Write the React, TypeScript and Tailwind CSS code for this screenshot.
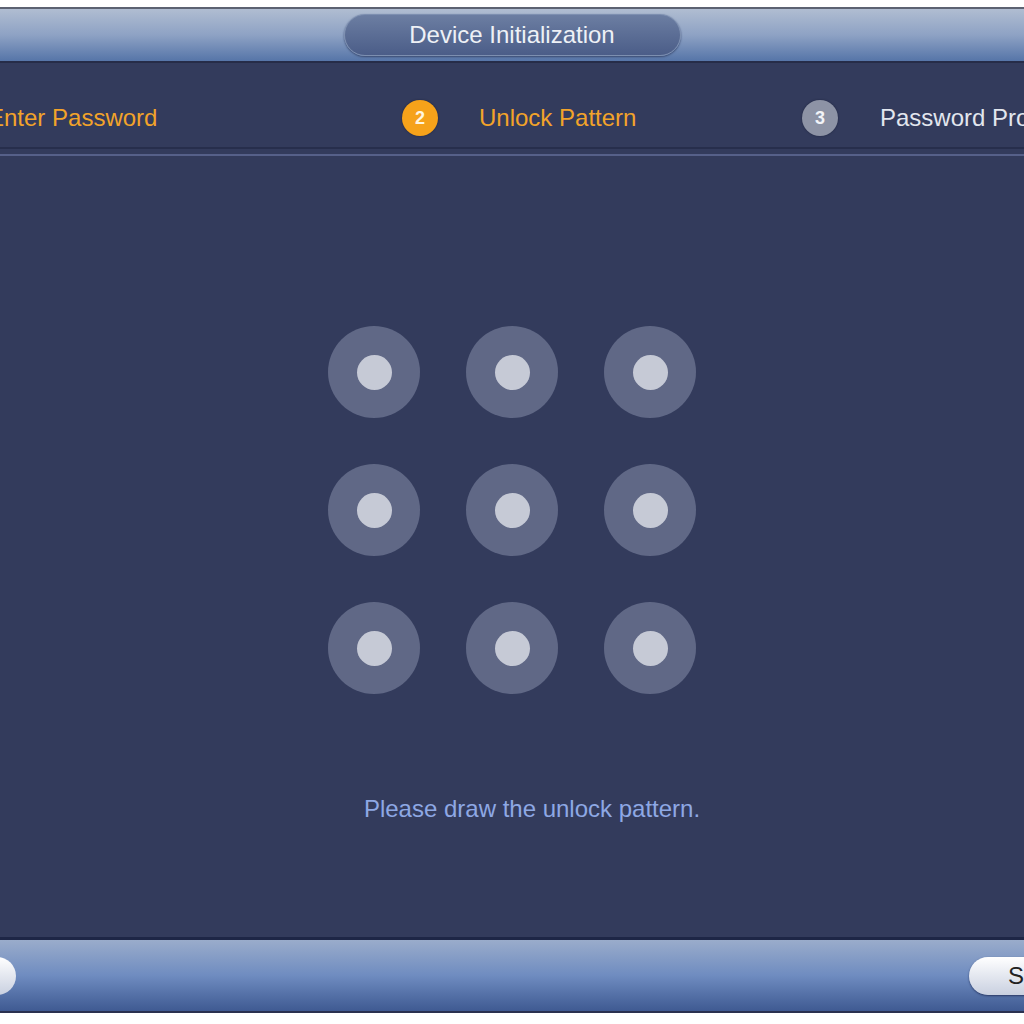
import React from 'react';

const font = { fontFamily: '"Liberation Sans", Arial, sans-serif' };

function StepBadge({ n, active }: { n: number; active?: boolean }) {
  return (
    <div
      className={
        active
          ? 'flex h-[36px] w-[36px] shrink-0 items-center justify-center rounded-full bg-[#f6a21a] text-[18px] font-bold text-[#fff6e0] shadow-[0_0_2px_#1c223c]'
          : 'flex h-[36px] w-[36px] shrink-0 items-center justify-center rounded-full bg-[#8d93a5] text-[18px] font-bold text-[#f2f4f8] shadow-[0_0_2px_#1c223c]'
      }
    >
      {n}
    </div>
  );
}

function Dot() {
  return (
    <div className="flex h-[92px] w-[92px] items-center justify-center rounded-full bg-[#606886]">
      <div className="h-[35px] w-[35px] rounded-full bg-[#c6cad6]" />
    </div>
  );
}

export default function App() {
  const rows = [0, 1, 2];
  return (
    <div className="flex h-[1024px] w-[1024px] flex-col overflow-hidden bg-white" style={font}>
      <div className="h-[7px] shrink-0 bg-white" />

      {/* title bar */}
      <div className="flex h-[56px] shrink-0 items-center justify-center border-t-2 border-b-2 border-t-[#5c6272] border-b-[#262c48] bg-gradient-to-b from-[#b0bdd1] via-[#8ea2c4] to-[#5675a8]">
        <div className="flex h-[42px] w-[337px] items-center justify-center rounded-full border border-[#7d8fb0] bg-gradient-to-b from-[#6c7ea2] to-[#4b5d88] shadow-[0_1px_2px_#3a4a70]">
          <span className="text-[24px] text-[#eef1f6]">Device Initialization</span>
        </div>
      </div>

      {/* body */}
      <div className="flex h-[874px] shrink-0 flex-col bg-[#333b5c]">
        <div className="flex h-[84px] shrink-0 items-center pt-[26px] text-[24px]">
          <span className="ml-[-12px] w-[414px] shrink-0 text-[#f2a32a]">Enter Password</span>
          <StepBadge n={2} active />
          <span className="ml-[41px] w-[323px] shrink-0 text-[#f2a32a]">Unlock Pattern</span>
          <StepBadge n={3} />
          <span className="ml-[42px] shrink-0 whitespace-nowrap text-[#e2e6ee]">Password Protection</span>
        </div>
        <div className="h-[2px] shrink-0 bg-[#272e4c]" />
        <div className="h-[5px] shrink-0" />
        <div className="h-[2px] shrink-0 bg-[#566089]" />

        <div className="mt-[170px] flex flex-col items-center gap-[46px]">
          {rows.map((r) => (
            <div key={r} className="flex gap-[46px]">
              <Dot />
              <Dot />
              <Dot />
            </div>
          ))}
        </div>

        <div className="mt-[97px] flex justify-center pl-[40px]">
          <span className="text-[24px] text-[#8ea8e4]">Please draw the unlock pattern.</span>
        </div>
      </div>

      {/* footer */}
      <div className="flex h-[76px] shrink-0 items-center justify-between border-t-[3px] border-b-2 border-t-[#1e2646] border-b-[#2a3150] bg-gradient-to-b from-[#9aaccb] via-[#6f8cc0] to-[#3f5a92]">
        <div className="ml-[-60px] h-[38px] w-[76px] rounded-full bg-gradient-to-b from-[#ffffff] to-[#c9d0e0]" />
        <div className="mr-[-60px] flex h-[38px] w-[115px] items-center rounded-full bg-gradient-to-b from-[#ffffff] to-[#c9d0e0] pl-[39px] shadow-[0_1px_2px_#2a3a66]">
          <span className="text-[24px] text-[#222]">Save</span>
        </div>
      </div>

      <div className="flex-1 bg-white" />
    </div>
  );
}
